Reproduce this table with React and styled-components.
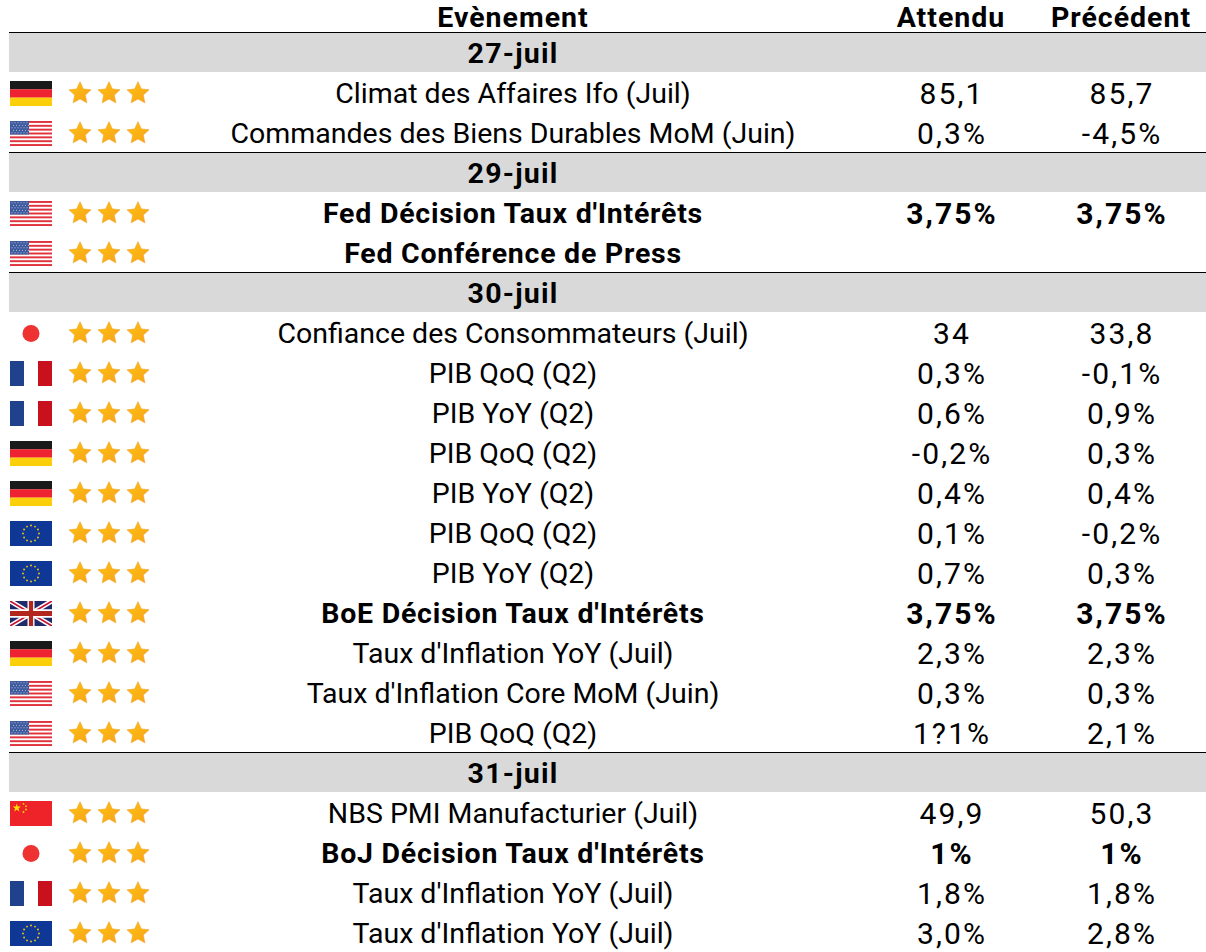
import React from 'react';
import styled, { createGlobalStyle } from 'styled-components';

const GlobalStyle = createGlobalStyle`
	body {
		margin: 0;
		background: #fff;
		font-family: Roboto, "Liberation Sans", sans-serif;
		color: #000;
	}
`;

const Table = styled.div`
	width: 1206px;
	padding-left: 9px;
	box-sizing: border-box;
`;

const Row = styled.div`
	display: grid;
	grid-template-columns: 51px 100px 706px 170px 170px;
	align-items: center;
	height: 40px;
	box-sizing: border-box;
	font-size: 28.5px;
	line-height: 40px;
	font-weight: ${p => (p.bold ? 700 : 400)};
	letter-spacing: ${p => (p.bold ? 0.75 : 0)}px;
`;

const HeaderRow = styled(Row)`
	height: 33px;
	line-height: 31px;
	font-weight: 700;
	letter-spacing: 1px;
	border-bottom: 1px solid #000;
`;

const DateRow = styled(Row)`
	background: #d9d9d9;
	font-weight: 700;
	letter-spacing: 1.2px;
	border-top: ${p => (p.first ? 'none' : '1px solid #000')};
	height: ${p => (p.first ? 39 : 40)}px;
	line-height: 38px;
`;

const Cell = styled.div`
	text-align: center;
	white-space: nowrap;
	padding-top: 2px;
`;

const NumCell = styled(Cell)`
	font-size: 30px;
	letter-spacing: 2.1px;
	text-indent: 2.1px;
`;

const FlagCell = styled.div`
	padding-left: 1px;
	display: flex;
	align-items: center;
`;

const Stars = styled.div`
	display: flex;
	gap: 5px;
	padding-left: 8px;
	align-items: center;
`;

const StarIcon = () => (
	<svg width="24" height="24" viewBox="0 0 24 24">
		<defs>
			<linearGradient id="sg" x1="0" y1="0" x2="1" y2="1">
				<stop offset="0" stopColor="#ffc20e" />
				<stop offset="1" stopColor="#f7a21b" />
			</linearGradient>
		</defs>
		<path
			d="M12 0.8l3.3 7.1 7.7 0.9-5.7 5.3 1.5 7.7L12 17.9l-6.8 3.9 1.5-7.7L1 8.8l7.7-0.9z"
			fill="url(#sg)"
			stroke="#f2a01c"
			strokeWidth="0.6"
			strokeLinejoin="round"
		/>
	</svg>
);

const FlagSvg = ({ children, vb = '0 0 42 25' }) => (
	<svg width="42" height="25" viewBox={vb} preserveAspectRatio="none">
		{children}
	</svg>
);

const euStars = () => {
	const out = [];
	for (let i = 0; i < 12; i++) {
		const a = (i / 12) * Math.PI * 2;
		out.push(<circle key={i} cx={21 + Math.cos(a) * 8} cy={12.5 + Math.sin(a) * 8} r="0.9" fill="#ffcc00" />);
	}
	return out;
};

const Flag = ({ c }) => {
	switch (c) {
		case 'de':
			return (
				<FlagSvg>
					<rect width="42" height="8.4" fill="#1a1a1a" />
					<rect y="8.3" width="42" height="8.4" fill="#ee2230" />
					<rect y="16.6" width="42" height="8.4" fill="#fccf0c" />
				</FlagSvg>
			);
		case 'us':
			return (
				<FlagSvg>
					<rect width="42" height="25" fill="#fff" />
					{[0, 2, 4, 6, 8, 10, 12].map(i => (
						<rect key={i} y={i * (25 / 13)} width="42" height={25 / 13} fill="#e0323c" />
					))}
					<rect width="19" height="13.5" fill="#3d5a9e" />
					{[0, 1, 2, 3, 4].map(r =>
						[0, 1, 2, 3, 4, 5].map(k => (
							<circle key={r + '-' + k} cx={2 + k * 3 + (r % 2) * 1.5} cy={1.8 + r * 2.5} r="0.55" fill="#c9d3ea" />
						))
					)}
				</FlagSvg>
			);
		case 'fr':
			return (
				<FlagSvg>
					<rect width="14" height="25" fill="#20418c" />
					<rect x="14" width="14" height="25" fill="#fff" />
					<rect x="28" width="14" height="25" fill="#c8111d" />
				</FlagSvg>
			);
		case 'eu':
			return (
				<FlagSvg>
					<rect width="42" height="28" fill="#0e3796" />
					{euStars()}
				</FlagSvg>
			);
		case 'jp':
			return (
				<FlagSvg>
					<circle cx="21" cy="12.5" r="8.5" fill="#ee3232" />
				</FlagSvg>
			);
		case 'uk':
			return (
				<FlagSvg vb="0 0 60 30">
					<rect width="60" height="30" fill="#1f2a6b" />
					<path d="M0,0 L60,30 M60,0 L0,30" stroke="#fff" strokeWidth="6" />
					<path d="M0,0 L60,30 M60,0 L0,30" stroke="#c8102e" strokeWidth="2" />
					<path d="M30,0 V30 M0,15 H60" stroke="#fff" strokeWidth="10" />
					<path d="M30,0 V30 M0,15 H60" stroke="#b3261e" strokeWidth="6" />
				</FlagSvg>
			);
		case 'cn':
			return (
				<FlagSvg>
					<rect width="42" height="25" fill="#ee2229" />
					<path d="M6.7 2.6l1.1 2.9 3.1 0.1-2.4 1.9 0.9 3-2.6-1.7-2.6 1.7 0.9-3-2.4-1.9 3.1-0.1z" fill="#ffde00" />
					<circle cx="13.5" cy="2.8" r="0.9" fill="#ffde00" />
					<circle cx="16" cy="5.2" r="0.9" fill="#ffde00" />
					<circle cx="16" cy="8.5" r="0.9" fill="#ffde00" />
					<circle cx="13.5" cy="11" r="0.9" fill="#ffde00" />
				</FlagSvg>
			);
		default:
			return null;
	}
};

const data = [
	{ date: '27-juil' },
	{ c: 'de', e: 'Climat des Affaires Ifo (Juil)', a: '85,1', p: '85,7' },
	{ c: 'us', e: 'Commandes des Biens Durables MoM (Juin)', a: '0,3%', p: '-4,5%' },
	{ date: '29-juil' },
	{ c: 'us', e: "Fed Décision Taux d'Intérêts", a: '3,75%', p: '3,75%', b: true },
	{ c: 'us', e: 'Fed Conférence de Press', a: '', p: '', b: true },
	{ date: '30-juil' },
	{ c: 'jp', e: 'Confiance des Consommateurs (Juil)', a: '34', p: '33,8' },
	{ c: 'fr', e: 'PIB QoQ (Q2)', a: '0,3%', p: '-0,1%' },
	{ c: 'fr', e: 'PIB YoY (Q2)', a: '0,6%', p: '0,9%' },
	{ c: 'de', e: 'PIB QoQ (Q2)', a: '-0,2%', p: '0,3%' },
	{ c: 'de', e: 'PIB YoY (Q2)', a: '0,4%', p: '0,4%' },
	{ c: 'eu', e: 'PIB QoQ (Q2)', a: '0,1%', p: '-0,2%' },
	{ c: 'eu', e: 'PIB YoY (Q2)', a: '0,7%', p: '0,3%' },
	{ c: 'uk', e: "BoE Décision Taux d'Intérêts", a: '3,75%', p: '3,75%', b: true },
	{ c: 'de', e: "Taux d'Inflation YoY (Juil)", a: '2,3%', p: '2,3%' },
	{ c: 'us', e: "Taux d'Inflation Core MoM (Juin)", a: '0,3%', p: '0,3%' },
	{ c: 'us', e: 'PIB QoQ (Q2)', a: '1?1%', p: '2,1%' },
	{ date: '31-juil' },
	{ c: 'cn', e: 'NBS PMI Manufacturier (Juil)', a: '49,9', p: '50,3' },
	{ c: 'jp', e: "BoJ Décision Taux d'Intérêts", a: '1%', p: '1%', b: true },
	{ c: 'fr', e: "Taux d'Inflation YoY (Juil)", a: '1,8%', p: '1,8%' },
	{ c: 'eu', e: "Taux d'Inflation YoY (Juil)", a: '3,0%', p: '2,8%' },
];

export default function App() {
	return (
		<>
			<GlobalStyle />
			<Table>
				<HeaderRow>
					<div />
					<div />
					<Cell>Evènement</Cell>
					<Cell>Attendu</Cell>
					<Cell>Précédent</Cell>
				</HeaderRow>
				{data.map((r, i) =>
					r.date ? (
						<DateRow key={i} first={i === 0}>
							<div />
							<div />
							<Cell>{r.date}</Cell>
							<div />
							<div />
						</DateRow>
					) : (
						<Row key={i} bold={r.b}>
							<FlagCell><Flag c={r.c} /></FlagCell>
							<Stars><StarIcon /><StarIcon /><StarIcon /></Stars>
							<Cell>{r.e}</Cell>
							<NumCell>{r.a}</NumCell>
							<NumCell>{r.p}</NumCell>
						</Row>
					)
				)}
			</Table>
		</>
	);
}
